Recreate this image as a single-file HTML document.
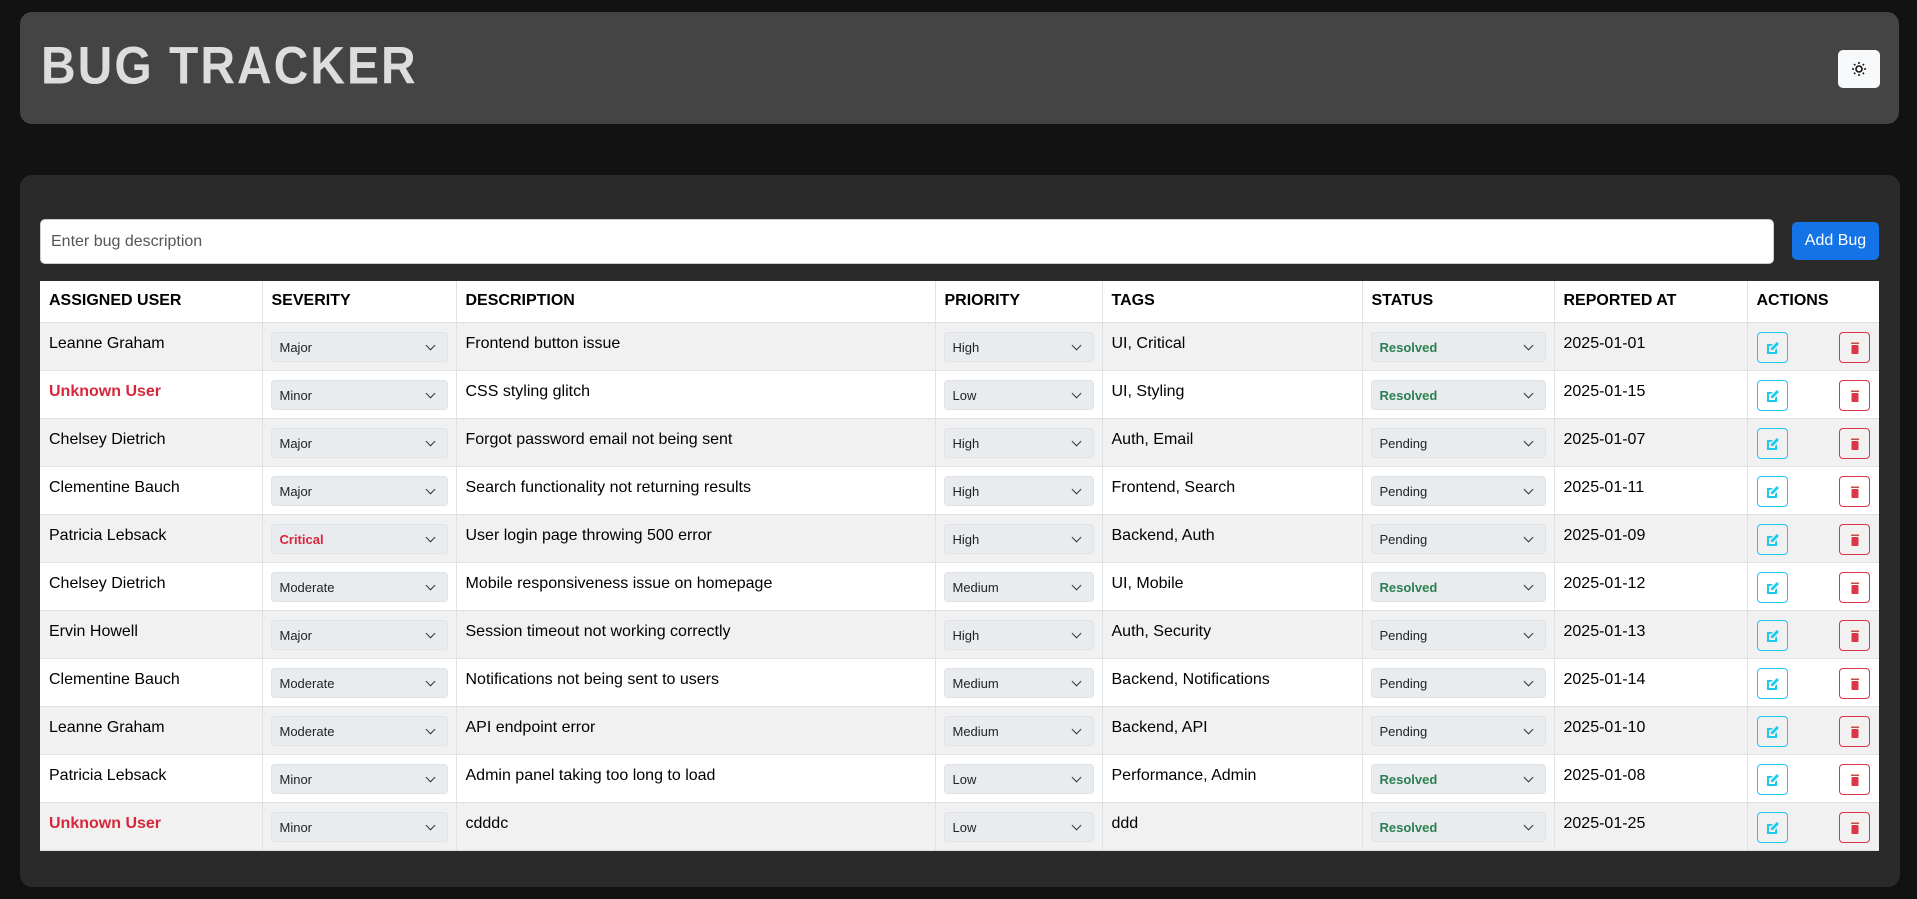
<!DOCTYPE html>
<html><head><meta charset="utf-8"><style>
*{box-sizing:border-box;margin:0;padding:0}
body{width:1917px;height:899px;background:#121212;font-family:"Liberation Sans",Arial,sans-serif;position:relative;overflow:hidden}
.hdr{position:absolute;left:20px;top:12px;width:1879px;height:112px;background:#444;border-radius:12px}
.hdr h1{position:absolute;left:21px;top:24px;font-size:48px;font-weight:bold;color:#ddd;letter-spacing:2px;line-height:56px;transform:scaleY(1.1);transform-origin:left top}
.theme{position:absolute;left:1818px;top:38px;width:42px;height:38px;background:#f8f9fa;border-radius:5px}
.theme svg{position:absolute;left:13px;top:11px}
.panel{position:absolute;left:20px;top:175px;width:1880px;height:712px;background:#2a2a2a;border-radius:12px}
.inp{position:absolute;left:40px;top:219px;width:1734px;height:45px;background:#fff;border:1px solid #ccc;border-radius:5px;font-size:16px;color:#555;padding:13px 10px}
.add{position:absolute;left:1792px;top:222px;width:87px;height:38px;background:#1573e8;color:#fff;border-radius:5px;font-size:16px;text-align:center;line-height:38px}
table{position:absolute;left:40px;top:281px;width:1839px;border-collapse:collapse;table-layout:fixed;background:#fff;font-size:16px;color:#000}
th{height:41px;text-align:left;padding:0 9px;font-size:16px;font-weight:bold;border-left:1px solid #dee2e6;border-bottom:1px solid #dee2e6;vertical-align:middle}
td{height:48px;padding:12px 9px 0;vertical-align:top;border-left:1px solid #dee2e6;border-bottom:1px solid #dee2e6;line-height:18px}
th:first-child,td:first-child{border-left:none}
tr:nth-child(odd) td{background:#f1f1f1}
tr:nth-child(even) td{background:#fff}
.sel{position:relative;margin:-3px -1px 0 -1px;height:30px;background:#e9ecef;border:1px solid #dee2e6;border-radius:4px;font-size:13px;line-height:29px;padding-left:8px;color:#222}
.sel:after{content:"";position:absolute;right:13px;top:9px;width:6px;height:6px;border-right:1.5px solid #333;border-bottom:1.5px solid #333;transform:rotate(45deg)}
.g{color:#2a8050;font-weight:bold}
.r{color:#d9263a;font-weight:bold}
.u{color:#d9263a;font-weight:bold}
.ab{position:absolute;width:31px;height:31px;border-radius:4px;top:0}
.ed{border:1px solid #1fc8ee;left:0}
.dl{border:1px solid #dc3545;left:82px}
.ab svg{position:absolute;left:8px;top:8px}
.act{position:relative;height:31px;margin-top:-3px}
</style></head><body>
<div class="hdr"><h1>BUG TRACKER</h1>
<div class="theme"><svg width="16" height="16" viewBox="0 0 16 16"><circle cx="8" cy="8" r="3" fill="none" stroke="#111" stroke-width="1.6"/><g stroke="#111" stroke-width="1.5"><path d="M8 1v2M8 13v2M1 8h2M13 8h2M3 3l1.3 1.3M11.7 11.7L13 13M3 13l1.3-1.3M11.7 4.3L13 3"/></g></svg></div></div>
<div class="panel"></div>
<div class="inp">Enter bug description</div>
<div class="add">Add Bug</div>
<table>
<colgroup><col style="width:222px"><col style="width:194px"><col style="width:479px"><col style="width:167px"><col style="width:260px"><col style="width:192px"><col style="width:193px"><col style="width:132px"></colgroup>
<tr><th>ASSIGNED USER</th><th>SEVERITY</th><th>DESCRIPTION</th><th>PRIORITY</th><th>TAGS</th><th>STATUS</th><th>REPORTED AT</th><th>ACTIONS</th></tr>
<tbody id="b"></tbody>
</table>
<script>
var rows=[["Leanne Graham","Major","Frontend button issue","High","UI, Critical","Resolved","2025-01-01"],
["Unknown User","Minor","CSS styling glitch","Low","UI, Styling","Resolved","2025-01-15"],
["Chelsey Dietrich","Major","Forgot password email not being sent","High","Auth, Email","Pending","2025-01-07"],
["Clementine Bauch","Major","Search functionality not returning results","High","Frontend, Search","Pending","2025-01-11"],
["Patricia Lebsack","Critical","User login page throwing 500 error","High","Backend, Auth","Pending","2025-01-09"],
["Chelsey Dietrich","Moderate","Mobile responsiveness issue on homepage","Medium","UI, Mobile","Resolved","2025-01-12"],
["Ervin Howell","Major","Session timeout not working correctly","High","Auth, Security","Pending","2025-01-13"],
["Clementine Bauch","Moderate","Notifications not being sent to users","Medium","Backend, Notifications","Pending","2025-01-14"],
["Leanne Graham","Moderate","API endpoint error","Medium","Backend, API","Pending","2025-01-10"],
["Patricia Lebsack","Minor","Admin panel taking too long to load","Low","Performance, Admin","Resolved","2025-01-08"],
["Unknown User","Minor","cdddc","Low","ddd","Resolved","2025-01-25"]];
var ed='<svg width="14" height="14" viewBox="0 0 14 14"><path d="M1 3h6L5 5H3v6h6V9l2-2v6H1z" fill="#1fc8ee"/><path d="M11 1l2 2-6 6H5V7z" fill="#1fc8ee"/></svg>';
var dl='<svg width="14" height="14" viewBox="0 0 14 14"><rect x="3" y="1.5" width="8" height="1.5" fill="#c84a4a"/><rect x="3.5" y="4" width="7" height="9" rx="1" fill="#dc3545"/></svg>';
var h="";rows.forEach(function(r){h+='<tr><td'+(r[0]=="Unknown User"?' class="u"':'')+'>'+r[0]+'</td><td><div class="sel'+(r[1]=="Critical"?' r':'')+'">'+r[1]+'</div></td><td>'+r[2]+'</td><td><div class="sel">'+r[3]+'</div></td><td>'+r[4]+'</td><td><div class="sel'+(r[5]=="Resolved"?' g':'')+'">'+r[5]+'</div></td><td>'+r[6]+'</td><td><div class="act"><div class="ab ed">'+ed+'</div><div class="ab dl">'+dl+'</div></div></td></tr>';});
document.getElementById("b").innerHTML=h;
</script>
</body></html>
